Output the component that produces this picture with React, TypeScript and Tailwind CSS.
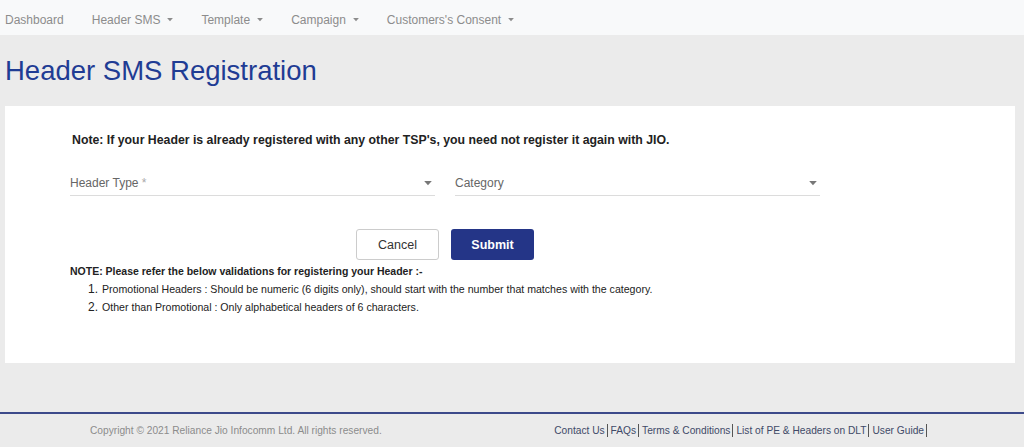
import React from 'react';

const navItems = [
  { label: 'Dashboard', caret: false },
  { label: 'Header SMS', caret: true },
  { label: 'Template', caret: true },
  { label: 'Campaign', caret: true },
  { label: "Customers's Consent", caret: true },
];

const footerLinks = ['Contact Us', 'FAQs', 'Terms & Conditions', 'List of PE & Headers on DLT', 'User Guide'];

const Caret: React.FC<{ className?: string; w?: number }> = ({ className, w = 8 }) => (
  <svg width={w} height={w * 0.6} viewBox="0 0 8 5" className={className}>
    <path d="M0 0 L8 0 L4 4.5 Z" fill="currentColor" />
  </svg>
);

const SelectField: React.FC<{ label: string; required?: boolean }> = ({ label, required }) => (
  <div className="w-[365px] h-[22px] flex items-center justify-between border-b border-[#dcdcdc] pb-[3px]">
    <span className="text-[12px] text-[#666]">
      {label}
      {required && <span className="text-[#aaa]"> *</span>}
    </span>
    <Caret className="text-[#777] mr-[3px]" />
  </div>
);

export default function App() {
  return (
    <div className="w-[1024px] h-[447px] bg-[#ebebeb] flex flex-col overflow-hidden font-['Liberation_Sans',Arial,sans-serif]">
      <nav className="h-[35px] bg-[#f8f9fa] flex items-center pt-[5px] pl-[5px] gap-[28px] text-[12px] text-[#8c8c8c]">
        {navItems.map((item) => (
          <div key={item.label} className="flex items-center gap-[7px]">
            <span>{item.label}</span>
            {item.caret && <Caret w={6} className="text-[#8c8c8c]" />}
          </div>
        ))}
      </nav>

      <div className="h-[71px] flex items-center pl-[5px]">
        <h1 className="text-[27.5px] text-[#1f3c94] font-medium">Header SMS Registration</h1>
      </div>

      <div className="mx-[5px] mr-[9px] h-[257px] bg-white pt-[25px]">
        <p className="pl-[67px] text-[12.3px] font-bold text-[#222]">
          Note: If your Header is already registered with any other TSP's, you need not register it again with JIO.
        </p>

        <div className="w-[750px] ml-[65px] mt-[25px] flex flex-col">
          <div className="flex justify-between">
            <SelectField label="Header Type" required />
            <SelectField label="Category" />
          </div>
          <div className="flex justify-center gap-[12px] mt-[33px]">
            <button className="w-[83px] h-[31px] border border-[#ccc] rounded-[3px] bg-white text-[12.5px] text-[#333]">Cancel</button>
            <button className="w-[83px] h-[31px] rounded-[3px] bg-[#243587] text-white text-[12.5px] font-bold">Submit</button>
          </div>
        </div>

        <div className="pl-[65px] mt-[4px] text-[#222]">
          <p className="text-[10.5px] leading-[14px] font-bold whitespace-nowrap">
            NOTE: Please refer the below validations for registering your Header :-
          </p>
          <ol className="mt-[2px] pl-[18px] flex flex-col gap-[2px]">
            <li className="flex items-baseline h-[16px] gap-[4px]">
              <span className="text-[12px]">1.</span>
              <span className="text-[10.6px] whitespace-nowrap">
                Promotional Headers : Should be numeric (6 digits only), should start with the number that matches with the category.
              </span>
            </li>
            <li className="flex items-baseline h-[16px] gap-[4px]">
              <span className="text-[12px]">2.</span>
              <span className="text-[10.6px] whitespace-nowrap">
                Other than Promotional : Only alphabetical headers of 6 characters.
              </span>
            </li>
          </ol>
        </div>
      </div>

      <div className="flex-1" />

      <footer className="h-[35px] border-t-2 border-[#3d4a8a] flex items-center text-[10.2px]">
        <span className="pl-[90px] text-[#8c8c8c]">Copyright © 2021 Reliance Jio Infocomm Ltd. All rights reserved.</span>
        <div className="ml-auto mr-[97px] flex items-center text-[#414a68]">
          {footerLinks.map((link, i) => (
            <span key={link} className="flex items-center">
              <span className={i === 0 ? 'pr-[2px]' : 'pl-[3px] pr-[2px]'}>{link}</span>
              <span className="w-px h-[13px] bg-[#555]" />
            </span>
          ))}
        </div>
      </footer>
    </div>
  );
}
